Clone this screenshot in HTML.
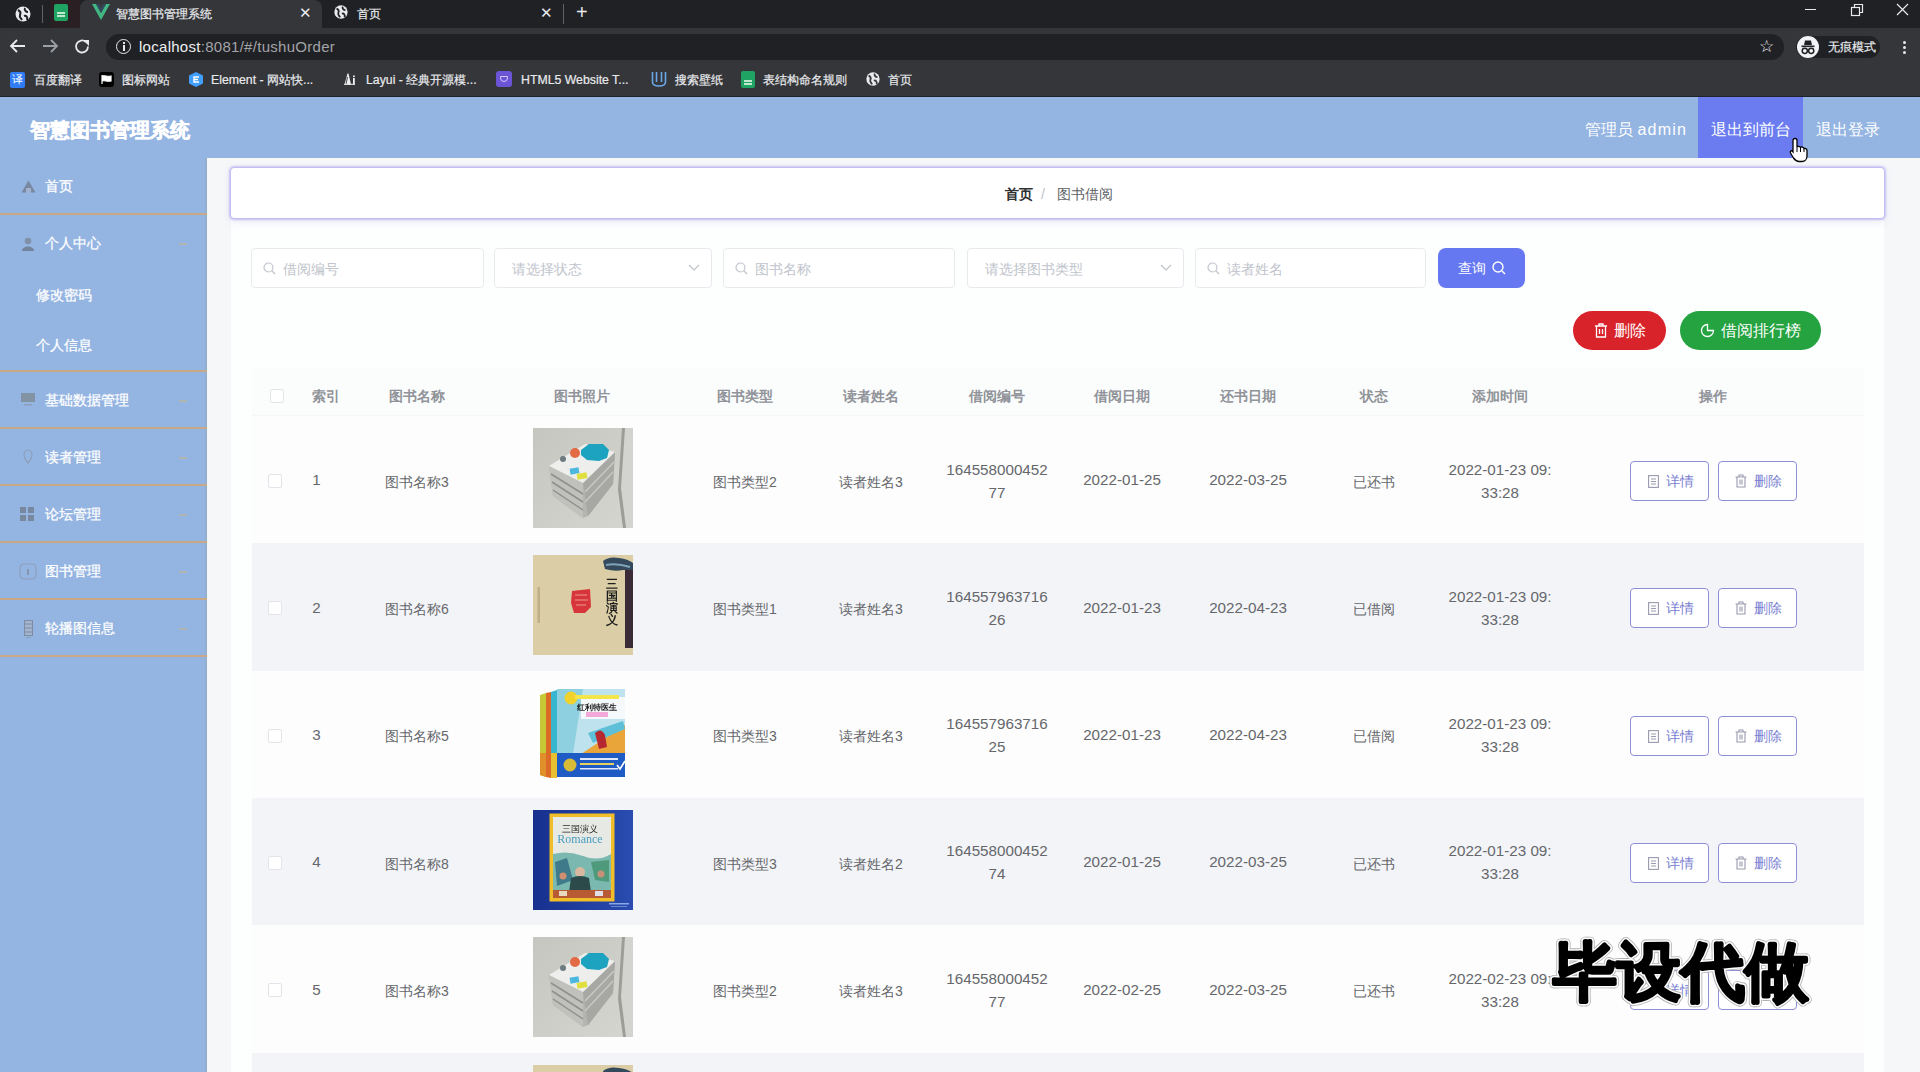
<!DOCTYPE html>
<html><head><meta charset="utf-8"><style>
*{box-sizing:border-box;margin:0;padding:0}
html,body{width:1920px;height:1072px;overflow:hidden;font-family:"Liberation Sans",sans-serif;background:#f6f8fb}
.a{position:absolute}
.t{position:absolute;white-space:nowrap;line-height:1}
#tabs{left:0;top:0;width:1920px;height:28px;background:#202124}
#toolbar{left:0;top:28px;width:1920px;height:36px;background:#35363a}
#bookmarks{left:0;top:64px;width:1920px;height:33px;background:#35363a}
.bm{color:#e8eaed;font-size:12.3px;top:74px;-webkit-text-stroke:.2px #e8eaed}
#page{left:0;top:97px;width:1920px;height:975px;background:#f5f7f9;overflow:hidden}
#header{left:0;top:0;width:1920px;height:61px;background:#94b4e2}
#sidebar{left:0;top:61px;width:207px;height:914px;background:#94b4e2}
.sep{position:absolute;left:0;width:207px;height:2px;background:#c9a885}
.mi{color:#fff;font-size:14px;-webkit-text-stroke:.25px #fff}
.arr{position:absolute;left:179px;width:8px;height:2px;background:#b9b79a;opacity:.7}
.inp{position:absolute;top:151px;height:40px;border:1px solid #e8eaee;border-radius:4px;background:#fff}
.ph{position:absolute;top:13px;font-size:14px;color:#c0c4cc;white-space:nowrap;line-height:1}
.th{position:absolute;font-size:14px;font-weight:bold;color:#909399;white-space:nowrap;text-align:center;width:200px;line-height:23px}
.td{position:absolute;font-size:14px;color:#65676b;text-align:center;width:200px;line-height:23px}
.ob{position:absolute;width:79px;height:40px;border:1px solid #8f8fd6;border-radius:4px;background:#fff}
.ob span{position:absolute;left:35px;top:12px;font-size:14px;line-height:1;color:#7a7fd2;white-space:nowrap}
.n{font-size:15.2px}
.cb{position:absolute;width:14px;height:14px;border:1px solid #e2e4e9;border-radius:2px;background:#fff}
</style></head>
<body>
<!-- Chrome frame -->
<div id="tabs" class="a">
  <svg class="a" style="left:14px;top:5px" width="18" height="18" viewBox="0 0 18 18"><circle cx="9" cy="9" r="7.5" fill="#e8eaed"/><path d="M4 5 C6 6,7 8,6 10 C5 12,7 13,8 15" stroke="#202124" stroke-width="2" fill="none"/><path d="M11 3 C10 5,12 7,14 7 M10 11 C12 10,14 12,13 15" stroke="#202124" stroke-width="2" fill="none"/></svg>
  <div class="a" style="left:42px;top:5px;width:1px;height:18px;background:#5f6368"></div>
  <div class="a" style="left:50px;top:0;width:30px;height:28px;background:#2a1f22"></div>
  <div class="a" style="left:54px;top:4px;width:14px;height:17px;background:#1fa463;border-radius:2px"></div><div class="a" style="left:57px;top:12px;width:8px;height:1.5px;background:#bfe8cf"></div><div class="a" style="left:57px;top:15px;width:8px;height:1.5px;background:#bfe8cf"></div>
  <div class="a" style="left:80px;top:0;width:242px;height:28px;background:#35363a;border-radius:8px 8px 0 0"></div>
  <svg class="a" style="left:92px;top:4px" width="18" height="16" viewBox="0 0 18 16"><path d="M0 0 L9 16 L18 0 L14 0 L9 9 L4 0 Z" fill="#41b883"/><path d="M4 0 L9 9 L14 0 L11 0 L9 4 L7 0Z" fill="#35495e"/></svg>
  <div class="t" style="left:116px;top:7.5px;color:#eceef0;font-size:12.3px;-webkit-text-stroke:.2px #e8eaed">智慧图书管理系统</div>
  <div class="t" style="left:299px;top:5px;color:#e8eaed;font-size:15px">✕</div>
  <svg class="a" style="left:333px;top:4px" width="16" height="16" viewBox="0 0 18 18"><circle cx="9" cy="9" r="7.5" fill="#e8eaed"/><path d="M4 5 C6 6,7 8,6 10 C5 12,7 13,8 15" stroke="#202124" stroke-width="2" fill="none"/><path d="M11 3 C10 5,12 7,14 7 M10 11 C12 10,14 12,13 15" stroke="#202124" stroke-width="2" fill="none"/></svg>
  <div class="t" style="left:357px;top:7.5px;color:#eceef0;font-size:12.3px;-webkit-text-stroke:.2px #e8eaed">首页</div>
  <div class="t" style="left:540px;top:5px;color:#e8eaed;font-size:15px">✕</div>
  <div class="a" style="left:563px;top:4px;width:1px;height:20px;background:#5f6368"></div>
  <div class="t" style="left:576px;top:2px;color:#e8eaed;font-size:20px">+</div>
  <div class="a" style="left:1805px;top:9px;width:11px;height:1.2px;background:#e8eaed"></div>
  <svg class="a" style="left:1850px;top:3px" width="14" height="14" viewBox="0 0 14 14"><rect x="1.5" y="4.5" width="8" height="8" stroke="#e8eaed" stroke-width="1.2" fill="none"/><path d="M4.5 4.5 V1.5 H12.5 V9.5 H9.5" stroke="#e8eaed" stroke-width="1.2" fill="none"/></svg>
  <svg class="a" style="left:1896px;top:3px" width="13" height="13" viewBox="0 0 13 13"><path d="M1 1 L12 12 M12 1 L1 12" stroke="#e8eaed" stroke-width="1.2"/></svg>
</div>
<div id="toolbar" class="a">
  <svg class="a" style="left:9px;top:10px" width="18" height="16" viewBox="0 0 18 16"><path d="M16 8 H3 M8 2 L2 8 L8 14" stroke="#e8eaed" stroke-width="1.8" fill="none"/></svg>
  <svg class="a" style="left:41px;top:10px" width="18" height="16" viewBox="0 0 18 16"><path d="M2 8 H15 M10 2 L16 8 L10 14" stroke="#9aa0a6" stroke-width="1.8" fill="none"/></svg>
  <svg class="a" style="left:74px;top:10px" width="17" height="17" viewBox="0 0 17 17"><path d="M14 8.5 A6 6 0 1 1 12 4" stroke="#e8eaed" stroke-width="1.8" fill="none"/><path d="M9 2 L15 2 L15 8 Z" fill="#e8eaed"/></svg>
  <div class="a" style="left:106px;top:6px;width:1678px;height:26px;background:#202124;border-radius:13px"></div>
  <div class="a" style="left:116px;top:11px;width:15px;height:15px;border:1.5px solid #e8eaed;border-radius:50%"></div>
  <div class="a" style="left:122.5px;top:17px;width:2px;height:6px;background:#e8eaed"></div>
  <div class="a" style="left:122.5px;top:14px;width:2px;height:2px;background:#e8eaed"></div>
  <div class="t" style="left:139px;top:11px;font-size:15px;letter-spacing:.28px;color:#eceef0">localhost<span style="color:#a2a4a8">:8081/#/tushuOrder</span></div>
  <div class="t" style="left:1759px;top:10px;color:#e8eaed;font-size:17px">☆</div>
  <div class="a" style="left:1796px;top:8px;width:84px;height:22px;background:#202124;border-radius:11px"></div>
  <svg class="a" style="left:1797px;top:8px" width="22" height="22" viewBox="0 0 22 22"><circle cx="11" cy="11" r="11" fill="#f1f3f4"/><path d="M8 4.5 H14 L15 9 H7 Z" fill="#202124"/><rect x="4.5" y="9.5" width="13" height="1.6" fill="#202124"/><circle cx="7.8" cy="14.8" r="2.6" stroke="#202124" stroke-width="1.5" fill="none"/><circle cx="14.2" cy="14.8" r="2.6" stroke="#202124" stroke-width="1.5" fill="none"/><path d="M10.4 14.5 H11.6" stroke="#202124" stroke-width="1.3"/></svg>
  <div class="t" style="left:1828px;top:12.5px;color:#eceef0;font-size:12.3px;-webkit-text-stroke:.2px #e8eaed">无痕模式</div>
  <div class="a" style="left:1903px;top:13px;width:3px;height:3px;background:#e8eaed;border-radius:50%"></div>
  <div class="a" style="left:1903px;top:18px;width:3px;height:3px;background:#e8eaed;border-radius:50%"></div>
  <div class="a" style="left:1903px;top:23px;width:3px;height:3px;background:#e8eaed;border-radius:50%"></div>
</div>
<div id="bookmarks" class="a"><div class="a" style="left:0;top:32px;width:1920px;height:1px;background:#1f2226"></div></div>
<div class="a" style="left:10px;top:72px;width:15px;height:16px;background:#2f7cf6;border-radius:2px"></div><div class="t" style="left:12px;top:74px;font-size:11px;color:#fff">译</div>
<div class="t bm" style="left:34px">百度翻译</div>
<div class="a" style="left:99px;top:72px;width:15px;height:15px;background:#000;border-radius:3px"></div><svg class="a" style="left:101px;top:75px" width="11" height="9" viewBox="0 0 11 9"><path d="M1 0 V9 M1 1 C4 0,6 2,10 1 V6 C6 7,4 5,1 6" stroke="#fff" stroke-width="1.2" fill="#fff"/></svg>
<div class="t bm" style="left:122px">图标网站</div>
<svg class="a" style="left:188px;top:71px" width="16" height="17" viewBox="0 0 16 17"><path d="M8 1 L15 4.5 V12.5 L8 16 L1 12.5 V4.5 Z" fill="#409eff"/><path d="M11 6 H6 V11 H11 M6 8.5 H10" stroke="#fff" stroke-width="1.4" fill="none"/></svg>
<div class="t bm" style="left:211px">Element - 网站快...</div>
<svg class="a" style="left:344px;top:73px" width="12" height="12" viewBox="0 0 12 12"><path d="M0.5 11.5 L3.5 0.5 L4.5 0.5 L7 11.5 Z" fill="#f1f1f1"/><path d="M3.5 4 L2 11.5" stroke="#35363a" stroke-width="0.9"/><rect x="9" y="5" width="1.8" height="6.5" fill="#f1f1f1"/><rect x="9" y="2.5" width="1.8" height="1.6" fill="#f1f1f1"/><rect x="0" y="10.8" width="11" height="1" fill="#f1f1f1"/></svg>
<div class="t bm" style="left:366px">Layui - 经典开源模...</div>
<div class="a" style="left:496px;top:71px;width:16px;height:16px;background:#6b55d6;border-radius:3px"></div><div class="a" style="left:500px;top:76px;width:8px;height:6px;border:1.5px solid #d8c8ff;border-radius:0 0 4px 4px"></div>
<div class="t bm" style="left:521px">HTML5 Website T...</div>
<svg class="a" style="left:651px;top:71px" width="16" height="17" viewBox="0 0 16 17"><path d="M1.5 1 V11 Q1.5 15,8 15 Q14.5 15,14.5 11 V1 M5.5 1 V11 M10.5 1 V11" stroke="#6aa7e8" stroke-width="1.6" fill="none"/></svg>
<div class="t bm" style="left:675px">搜索壁纸</div>
<div class="a" style="left:741px;top:71px;width:14px;height:17px;background:#1fa463;border-radius:2px"></div><div class="a" style="left:744px;top:80px;width:8px;height:1.5px;background:#bfe8cf"></div><div class="a" style="left:744px;top:83px;width:8px;height:1.5px;background:#bfe8cf"></div>
<div class="t bm" style="left:763px">表结构命名规则</div>
<svg class="a" style="left:865px;top:71px" width="16" height="16" viewBox="0 0 18 18"><circle cx="9" cy="9" r="7.5" fill="#e8eaed"/><path d="M4 5 C6 6,7 8,6 10 C5 12,7 13,8 15" stroke="#35363a" stroke-width="2" fill="none"/><path d="M11 3 C10 5,12 7,14 7 M10 11 C12 10,14 12,13 15" stroke="#35363a" stroke-width="2" fill="none"/></svg>
<div class="t bm" style="left:888px">首页</div>

<div id="page" class="a">

<div id="header" class="a">
  <div class="t" style="left:30px;top:23px;font-size:20px;font-weight:bold;color:#fff;-webkit-text-stroke:.5px #fff">智慧图书管理系统</div>
  <div class="t" style="left:1585px;top:25px;font-size:16px;color:#fff">管理员 <span style="letter-spacing:1.2px">admin</span></div>
  <div class="a" style="left:1698px;top:0;width:105px;height:61px;background:#6a7cf0"></div>
  <div class="t" style="left:1711px;top:25px;font-size:16px;color:#fff">退出到前台</div>
  <div class="t" style="left:1816px;top:25px;font-size:16px;color:#fff">退出登录</div>
</div>
<div id="sidebar" class="a"><div class="a" style="left:205px;top:0;width:2px;height:914px;background:#93aed0"></div><div class="t mi" style="left:45px;top:21px">首页</div><svg class="a" style="left:21px;top:22px;opacity:.75" width="15" height="13" viewBox="0 0 15 13"><path d="M7.5 0.5 L14.5 12.5 H0.5 Z" fill="#6f7a8c"/><rect x="5" y="8" width="5" height="5" fill="#a3b3cc"/></svg><div class="sep" style="top:55px"></div><div class="t mi" style="left:45px;top:78px">个人中心</div><svg class="a" style="left:22px;top:79px;opacity:.75" width="12" height="14" viewBox="0 0 12 14"><circle cx="6" cy="4" r="3.3" fill="#7a8596"/><path d="M0 14 C0 8,12 8,12 14Z" fill="#6a7487"/></svg><div class="t mi" style="left:36px;top:130px">修改密码</div><div class="t mi" style="left:36px;top:180px">个人信息</div><div class="sep" style="top:212px"></div><div class="t mi" style="left:45px;top:235px">基础数据管理</div><svg class="a" style="left:21px;top:235px;opacity:.75" width="14" height="13" viewBox="0 0 14 13"><rect x="0" y="0" width="14" height="9" fill="#7d8890"/><rect x="3" y="11" width="8" height="1.5" fill="#8d98b0"/></svg><div class="sep" style="top:269px"></div><div class="t mi" style="left:45px;top:292px">读者管理</div><svg class="a" style="left:23px;top:291px;opacity:.75" width="10" height="15" viewBox="0 0 10 15"><path d="M5 1 C8 1,9 4,9 6 C9 9,5 14,5 14 C5 14,1 9,1 6 C1 4,2 1,5 1Z" stroke="#8a96aa" stroke-width="1.2" fill="none"/></svg><div class="sep" style="top:326px"></div><div class="t mi" style="left:45px;top:349px">论坛管理</div><svg class="a" style="left:20px;top:349px;opacity:.75" width="14" height="14" viewBox="0 0 14 14"><rect x="0" y="0" width="6" height="6" fill="#6f7a88"/><rect x="8" y="0" width="6" height="6" fill="#6f7a88"/><rect x="0" y="8" width="6" height="6" fill="#6f7a88"/><rect x="8" y="8" width="6" height="6" fill="#6f7a88"/></svg><div class="sep" style="top:383px"></div><div class="t mi" style="left:45px;top:406px">图书管理</div><svg class="a" style="left:19px;top:405px;opacity:.75" width="18" height="17" viewBox="0 0 18 17"><rect x="1" y="1" width="16" height="15" rx="4" stroke="#8b98ae" stroke-width="1.2" fill="none"/><rect x="8" y="6" width="2" height="6" fill="#7f8ba0"/></svg><div class="sep" style="top:440px"></div><div class="t mi" style="left:45px;top:463px">轮播图信息</div><svg class="a" style="left:24px;top:462px;opacity:.75" width="9" height="18" viewBox="0 0 9 18"><rect x="0.5" y="0.5" width="8" height="15" stroke="#74808f" stroke-width="1" fill="#a9b6c8"/><path d="M1 4 H8 M1 8 H8 M1 12 H8" stroke="#74808f" stroke-width="1"/><rect x="2" y="17" width="5" height="1" fill="#8a96a8"/></svg><div class="sep" style="top:497px"></div><div class="arr" style="top:85px"></div><div class="arr" style="top:242px"></div><div class="arr" style="top:299px"></div><div class="arr" style="top:356px"></div><div class="arr" style="top:413px"></div><div class="arr" style="top:470px"></div></div><div class="a" style="left:231px;top:123px;width:1653px;height:900px;background:#fdfefe"></div><div class="a" style="left:230px;top:70px;width:1655px;height:52px;background:#fff;border:1.5px solid #c2bdf2;border-radius:4px;box-shadow:0 0 2px 1px rgba(170,160,240,.55),0 3px 8px rgba(150,150,210,.18)">
  <div class="t" style="left:773.5px;top:18.5px;font-size:14px;font-weight:bold;color:#303133">首页</div>
  <div class="t" style="left:810px;top:18.5px;font-size:14px;color:#c0c4cc">/</div>
  <div class="t" style="left:825.5px;top:18.5px;font-size:14px;color:#606266">图书借阅</div>
</div><div class="inp" style="left:251px;width:233px"><svg class="a" style="left:11px;top:13px" width="13" height="13" viewBox="0 0 13 13"><circle cx="5.5" cy="5.5" r="4.5" stroke="#c0c4cc" stroke-width="1.2" fill="none"/><path d="M9 9 L12 12" stroke="#c0c4cc" stroke-width="1.2"/></svg><div class="ph" style="left:31px">借阅编号</div></div><div class="inp" style="left:494px;width:218px"><div class="ph" style="left:17px">请选择状态</div><svg class="a" style="left:193px;top:15px" width="12" height="8" viewBox="0 0 12 8"><path d="M1 1 L6 6 L11 1" stroke="#c0c4cc" stroke-width="1.2" fill="none"/></svg></div><div class="inp" style="left:723px;width:232px"><svg class="a" style="left:11px;top:13px" width="13" height="13" viewBox="0 0 13 13"><circle cx="5.5" cy="5.5" r="4.5" stroke="#c0c4cc" stroke-width="1.2" fill="none"/><path d="M9 9 L12 12" stroke="#c0c4cc" stroke-width="1.2"/></svg><div class="ph" style="left:31px">图书名称</div></div><div class="inp" style="left:967px;width:217px"><div class="ph" style="left:17px">请选择图书类型</div><svg class="a" style="left:192px;top:15px" width="12" height="8" viewBox="0 0 12 8"><path d="M1 1 L6 6 L11 1" stroke="#c0c4cc" stroke-width="1.2" fill="none"/></svg></div><div class="inp" style="left:1195px;width:231px"><svg class="a" style="left:11px;top:13px" width="13" height="13" viewBox="0 0 13 13"><circle cx="5.5" cy="5.5" r="4.5" stroke="#c0c4cc" stroke-width="1.2" fill="none"/><path d="M9 9 L12 12" stroke="#c0c4cc" stroke-width="1.2"/></svg><div class="ph" style="left:31px">读者姓名</div></div><div class="a" style="left:1438px;top:151px;width:87px;height:40px;background:#6677f2;border-radius:8px">
  <div class="t" style="left:20px;top:13px;font-size:14px;color:#fff">查询</div>
  <svg class="a" style="left:54px;top:13px" width="14" height="14" viewBox="0 0 14 14"><circle cx="6" cy="6" r="5" stroke="#fff" stroke-width="1.4" fill="none"/><path d="M10 10 L13 13" stroke="#fff" stroke-width="1.4"/></svg>
</div><div class="a" style="left:1573px;top:214px;width:93px;height:39px;background:#d9232b;border-radius:20px">
  <svg class="a" style="left:21px;top:12px" width="14" height="15" viewBox="0 0 14 15"><path d="M1 3 H13 M5 3 V1 H9 V3 M2.5 3 V14 H11.5 V3 M5.5 6 V11 M8.5 6 V11" stroke="#fff" stroke-width="1.3" fill="none"/></svg>
  <div class="t" style="left:41px;top:11.5px;font-size:16px;color:#fff">删除</div>
</div><div class="a" style="left:1680px;top:214px;width:141px;height:39px;background:#24a340;border-radius:20px">
  <svg class="a" style="left:20px;top:12px" width="15" height="15" viewBox="0 0 15 15"><path d="M7.5 1.5 A6 6 0 1 0 13.5 7.5 H7.5 Z" stroke="#fff" stroke-width="1.3" fill="none"/></svg>
  <div class="t" style="left:41px;top:11.5px;font-size:16px;color:#fff">借阅排行榜</div>
</div><div class="a" style="left:252px;top:271px;width:1612px;height:48px;background:#fbfcfc;border-bottom:1px solid #f5f6f8"></div><div class="cb" style="left:270px;top:292px"></div><div class="th" style="left:226px;top:288px">索引</div><div class="th" style="left:317px;top:288px">图书名称</div><div class="th" style="left:482px;top:288px">图书照片</div><div class="th" style="left:645px;top:288px">图书类型</div><div class="th" style="left:771px;top:288px">读者姓名</div><div class="th" style="left:897px;top:288px">借阅编号</div><div class="th" style="left:1022px;top:288px">借阅日期</div><div class="th" style="left:1148px;top:288px">还书日期</div><div class="th" style="left:1274px;top:288px">状态</div><div class="th" style="left:1400px;top:288px">添加时间</div><div class="th" style="left:1613px;top:288px">操作</div><div class="a" style="left:252px;top:319.0px;width:1612px;height:127.8px;background:#fdfdfe"></div><div class="cb" style="left:268px;top:377.0px"></div><div class="td n" style="left:216.5px;top:371.3px">1</div><div class="td" style="left:317px;top:373.6px">图书名称3</div><div class="td" style="left:645px;top:373.6px">图书类型2</div><div class="td" style="left:771px;top:373.6px">读者姓名3</div><div class="td n" style="left:1022px;top:371.3px">2022-01-25</div><div class="td n" style="left:1148px;top:371.3px">2022-03-25</div><div class="td" style="left:1274px;top:373.6px">已还书</div><div class="td n" style="left:897px;top:360.5px">164558000452<br>77</div><div class="td n" style="left:1400px;top:360.5px">2022-01-23 09:<br>33:28</div><div class="a" style="left:533px;top:331.0px;width:100px;height:100px;overflow:hidden"><div style="filter:blur(.45px);width:100px;height:100px"><svg width="100" height="100" viewBox="0 0 100 100"><defs><linearGradient id="g1" x1="0" y1="0" x2="1" y2="1"><stop offset="0" stop-color="#c6c6c1"/><stop offset="1" stop-color="#d6d6d1"/></linearGradient></defs>
<rect width="100" height="100" fill="url(#g1)"/><path d="M90 0 L100 0 L100 100 L92 100 L87 62Z" fill="#d3d3cf"/><path d="M89 0 L92 0 L88 60 L93 100 L90 100 L85 62Z" fill="#9c9c98"/>
<path d="M16 38 L20 68 L50 90 L55 88 L80 56 L82 24Z" fill="#b4b4b0"/>
<path d="M16 38 L20 68 L50 90 L50 55Z" fill="#c0c0bc"/><path d="M18 46 L50 66 M19 54 L50 74 M20 62 L50 82" stroke="#8f8f8b" stroke-width="1.5"/>
<path d="M50 55 L82 24 L80 56 L55 88Z" fill="#a7a7a3"/><path d="M52 64 L81 34 M52 74 L80 44" stroke="#c8c8c4" stroke-width="1.5"/>
<path d="M16 38 L52 16 L82 24 L50 55Z" fill="#eeeeec"/>
<path d="M48 22 L56 16 L70 16 L76 22 L74 30 L66 33 L54 32 L48 27Z" fill="#1da3bf"/><circle cx="42" cy="25" r="5" fill="#e26a45"/><circle cx="30" cy="31" r="3" fill="#6d7a80"/>
<rect x="37" y="40" width="9" height="6" fill="#4cb8e0" transform="rotate(-10 41 43)"/><rect x="44" y="45" width="10" height="6" fill="#dfe040" transform="rotate(-10 49 48)"/></svg></div></div><div class="ob" style="left:1630px;top:364.0px"><svg class="a" style="left:17px;top:13px" width="11" height="13" viewBox="0 0 11 13"><rect x="0.6" y="0.6" width="9.8" height="11.8" stroke="#9a9ab0" stroke-width="1.1" fill="none"/><path d="M3 4 H8 M3 6.5 H8 M3 9 H8" stroke="#9a9ab0" stroke-width="1"/></svg><span>详情</span></div><div class="ob" style="left:1718px;top:364.0px"><svg class="a" style="left:16px;top:12px" width="12" height="14" viewBox="0 0 12 14"><path d="M0.5 3 H11.5 M4 3 V1 H8 V3 M2 3 V13 H10 V3 M5 5.5 V10.5 M7 5.5 V10.5" stroke="#9a9ab0" stroke-width="1.1" fill="none"/></svg><span>删除</span></div><div class="a" style="left:252px;top:446.3px;width:1612px;height:127.8px;background:#f3f4f8"></div><div class="cb" style="left:268px;top:504.3px"></div><div class="td n" style="left:216.5px;top:498.6px">2</div><div class="td" style="left:317px;top:500.9px">图书名称6</div><div class="td" style="left:645px;top:500.9px">图书类型1</div><div class="td" style="left:771px;top:500.9px">读者姓名3</div><div class="td n" style="left:1022px;top:498.6px">2022-01-23</div><div class="td n" style="left:1148px;top:498.6px">2022-04-23</div><div class="td" style="left:1274px;top:500.9px">已借阅</div><div class="td n" style="left:897px;top:487.8px">164557963716<br>26</div><div class="td n" style="left:1400px;top:487.8px">2022-01-23 09:<br>33:28</div><div class="a" style="left:533px;top:458.3px;width:100px;height:100px;overflow:hidden"><div style="filter:blur(.45px);width:100px;height:100px"><svg width="100" height="100" viewBox="0 0 100 100"><rect width="100" height="100" fill="#dbcea6"/>
<rect x="92" y="14" width="8" height="79" fill="#3b2b36"/><path d="M70 6 Q76 1 86 3 Q95 4 100 8 L100 15 L90 15 Q82 17 72 14Z" fill="#34495c"/><path d="M73 10 Q84 8 97 12" stroke="#7fa3b8" stroke-width="2" fill="none"/>
<text x="78.5" y="33" font-size="11.5" font-weight="bold" fill="#1e1e1e" text-anchor="middle">三</text><text x="78.5" y="45" font-size="11.5" font-weight="bold" fill="#1e1e1e" text-anchor="middle">国</text><text x="78.5" y="57" font-size="11.5" font-weight="bold" fill="#1e1e1e" text-anchor="middle">演</text><text x="78.5" y="69" font-size="11.5" font-weight="bold" fill="#1e1e1e" text-anchor="middle">义</text>
<path d="M39 36 L57 34 L58 52 L52 58 L41 58 L38 48Z" fill="#d8343c"/><path d="M42 40 H54 M42 45 H55 M43 50 H53" stroke="#e89a90" stroke-width="1"/><rect x="4.5" y="32" width="2.5" height="36" fill="#bfae88"/></svg></div></div><div class="ob" style="left:1630px;top:491.3px"><svg class="a" style="left:17px;top:13px" width="11" height="13" viewBox="0 0 11 13"><rect x="0.6" y="0.6" width="9.8" height="11.8" stroke="#9a9ab0" stroke-width="1.1" fill="none"/><path d="M3 4 H8 M3 6.5 H8 M3 9 H8" stroke="#9a9ab0" stroke-width="1"/></svg><span>详情</span></div><div class="ob" style="left:1718px;top:491.3px"><svg class="a" style="left:16px;top:12px" width="12" height="14" viewBox="0 0 12 14"><path d="M0.5 3 H11.5 M4 3 V1 H8 V3 M2 3 V13 H10 V3 M5 5.5 V10.5 M7 5.5 V10.5" stroke="#9a9ab0" stroke-width="1.1" fill="none"/></svg><span>删除</span></div><div class="a" style="left:252px;top:573.6px;width:1612px;height:127.8px;background:#fdfdfe"></div><div class="cb" style="left:268px;top:631.6px"></div><div class="td n" style="left:216.5px;top:625.9px">3</div><div class="td" style="left:317px;top:628.2px">图书名称5</div><div class="td" style="left:645px;top:628.2px">图书类型3</div><div class="td" style="left:771px;top:628.2px">读者姓名3</div><div class="td n" style="left:1022px;top:625.9px">2022-01-23</div><div class="td n" style="left:1148px;top:625.9px">2022-04-23</div><div class="td" style="left:1274px;top:628.2px">已借阅</div><div class="td n" style="left:897px;top:615.1px">164557963716<br>25</div><div class="td n" style="left:1400px;top:615.1px">2022-01-23 09:<br>33:28</div><div class="a" style="left:533px;top:585.6px;width:100px;height:100px;overflow:hidden"><div style="filter:blur(.45px);width:100px;height:100px"><svg width="100" height="100" viewBox="0 0 100 100"><rect width="100" height="100" fill="#fdfdfe"/>
<path d="M7 12 L13 10 L13 94 L7 92Z" fill="#c5c936"/><path d="M7 70 L13 70 L13 94 L7 92Z" fill="#e0902a"/><path d="M13 10 L18 9 L18 95 L13 94Z" fill="#de6a28"/><path d="M18 9 L24 7 L24 95 L18 95Z" fill="#37b6cf"/><path d="M18 70 L24 70 L24 95 L18 95Z" fill="#e8c030"/>
<rect x="24" y="6" width="68" height="65" fill="#bfe3ee"/><path d="M24 6 H50 L40 71 H24Z" fill="#8fd0e0"/><rect x="48" y="14" width="44" height="22" fill="#f6f9fb"/>
<circle cx="38" cy="15" r="6.5" fill="#f0d22a"/><rect x="42" y="12" width="44" height="4" fill="#f3e64a"/>
<text x="64" y="27" font-size="8" font-weight="bold" fill="#1a1a1a" text-anchor="middle">红利特医生</text><rect x="53" y="29" width="22" height="5" fill="#f2a8d8"/>
<path d="M48 71 L92 42 L92 71Z" fill="#e9a43a"/><path d="M55 50 L90 38 L92 46 L60 60Z" fill="#5ec0d8"/><path d="M62 50 Q68 44 72 52 L74 64 L66 66Z" fill="#b62830"/>
<rect x="24" y="70" width="68" height="24" fill="#1f5bc4"/><circle cx="37" cy="82" r="6.5" fill="#d8bc38"/><rect x="47" y="75" width="38" height="2" fill="#dfe8ff"/><rect x="47" y="80" width="34" height="2" fill="#e8d060"/><rect x="47" y="85" width="38" height="1.5" fill="#dfe8ff"/><path d="M84 82 L87 86 L92 78" stroke="#ffffff" stroke-width="1.6" fill="none"/></svg></div></div><div class="ob" style="left:1630px;top:618.6px"><svg class="a" style="left:17px;top:13px" width="11" height="13" viewBox="0 0 11 13"><rect x="0.6" y="0.6" width="9.8" height="11.8" stroke="#9a9ab0" stroke-width="1.1" fill="none"/><path d="M3 4 H8 M3 6.5 H8 M3 9 H8" stroke="#9a9ab0" stroke-width="1"/></svg><span>详情</span></div><div class="ob" style="left:1718px;top:618.6px"><svg class="a" style="left:16px;top:12px" width="12" height="14" viewBox="0 0 12 14"><path d="M0.5 3 H11.5 M4 3 V1 H8 V3 M2 3 V13 H10 V3 M5 5.5 V10.5 M7 5.5 V10.5" stroke="#9a9ab0" stroke-width="1.1" fill="none"/></svg><span>删除</span></div><div class="a" style="left:252px;top:700.9px;width:1612px;height:127.8px;background:#f3f4f8"></div><div class="cb" style="left:268px;top:758.9px"></div><div class="td n" style="left:216.5px;top:753.2px">4</div><div class="td" style="left:317px;top:755.5px">图书名称8</div><div class="td" style="left:645px;top:755.5px">图书类型3</div><div class="td" style="left:771px;top:755.5px">读者姓名2</div><div class="td n" style="left:1022px;top:753.2px">2022-01-25</div><div class="td n" style="left:1148px;top:753.2px">2022-03-25</div><div class="td" style="left:1274px;top:755.5px">已还书</div><div class="td n" style="left:897px;top:742.4px">164558000452<br>74</div><div class="td n" style="left:1400px;top:742.4px">2022-01-23 09:<br>33:28</div><div class="a" style="left:533px;top:712.9px;width:100px;height:100px;overflow:hidden"><div style="filter:blur(.45px);width:100px;height:100px"><svg width="100" height="100" viewBox="0 0 100 100"><defs><linearGradient id="g4" x1="0" y1="0" x2="1" y2="0"><stop offset="0" stop-color="#16308e"/><stop offset="1" stop-color="#2a4cb0"/></linearGradient></defs><rect width="100" height="100" fill="url(#g4)"/>
<rect x="16.5" y="3.5" width="65" height="88" fill="#f0be28"/><rect x="20" y="7" width="58" height="81" fill="#e6e9e4"/>
<text x="47" y="22" font-size="8.5" font-family="Liberation Serif" fill="#2a2a2a" text-anchor="middle">三国演义</text><text x="47" y="33" font-size="12" fill="#4a9cc0" text-anchor="middle" font-family="Liberation Serif">Romance</text>
<path d="M20 44 Q35 40 50 46 T78 44 V88 H20Z" fill="#7ab8b0"/><path d="M22 52 L34 48 L40 70 L24 76Z" fill="#3e7a8a"/><path d="M58 52 L76 50 L76 72 L62 70Z" fill="#4f9a7a"/>
<circle cx="47" cy="62" r="5" fill="#d8b8a0"/><path d="M38 68 Q47 64 56 68 L58 82 H36Z" fill="#2c4a4a"/><circle cx="30" cy="66" r="3.5" fill="#d09070"/><circle cx="68" cy="64" r="3.5" fill="#c89078"/>
<rect x="20" y="80" width="58" height="8" fill="#b85a34"/><rect x="26" y="81" width="8" height="5" fill="#e8d8c0"/><rect x="62" y="81" width="8" height="5" fill="#e0e0e8"/>
<rect x="76" y="93" width="20" height="1.5" fill="#8aa8e8"/><rect x="78" y="96" width="16" height="1" fill="#6a88d0"/></svg></div></div><div class="ob" style="left:1630px;top:745.9px"><svg class="a" style="left:17px;top:13px" width="11" height="13" viewBox="0 0 11 13"><rect x="0.6" y="0.6" width="9.8" height="11.8" stroke="#9a9ab0" stroke-width="1.1" fill="none"/><path d="M3 4 H8 M3 6.5 H8 M3 9 H8" stroke="#9a9ab0" stroke-width="1"/></svg><span>详情</span></div><div class="ob" style="left:1718px;top:745.9px"><svg class="a" style="left:16px;top:12px" width="12" height="14" viewBox="0 0 12 14"><path d="M0.5 3 H11.5 M4 3 V1 H8 V3 M2 3 V13 H10 V3 M5 5.5 V10.5 M7 5.5 V10.5" stroke="#9a9ab0" stroke-width="1.1" fill="none"/></svg><span>删除</span></div><div class="a" style="left:252px;top:828.2px;width:1612px;height:127.8px;background:#fdfdfe"></div><div class="cb" style="left:268px;top:886.2px"></div><div class="td n" style="left:216.5px;top:880.5px">5</div><div class="td" style="left:317px;top:882.8px">图书名称3</div><div class="td" style="left:645px;top:882.8px">图书类型2</div><div class="td" style="left:771px;top:882.8px">读者姓名3</div><div class="td n" style="left:1022px;top:880.5px">2022-02-25</div><div class="td n" style="left:1148px;top:880.5px">2022-03-25</div><div class="td" style="left:1274px;top:882.8px">已还书</div><div class="td n" style="left:897px;top:869.7px">164558000452<br>77</div><div class="td n" style="left:1400px;top:869.7px">2022-02-23 09:<br>33:28</div><div class="a" style="left:533px;top:840.2px;width:100px;height:100px;overflow:hidden"><div style="filter:blur(.45px);width:100px;height:100px"><svg width="100" height="100" viewBox="0 0 100 100"><defs><linearGradient id="g1" x1="0" y1="0" x2="1" y2="1"><stop offset="0" stop-color="#c6c6c1"/><stop offset="1" stop-color="#d6d6d1"/></linearGradient></defs>
<rect width="100" height="100" fill="url(#g1)"/><path d="M90 0 L100 0 L100 100 L92 100 L87 62Z" fill="#d3d3cf"/><path d="M89 0 L92 0 L88 60 L93 100 L90 100 L85 62Z" fill="#9c9c98"/>
<path d="M16 38 L20 68 L50 90 L55 88 L80 56 L82 24Z" fill="#b4b4b0"/>
<path d="M16 38 L20 68 L50 90 L50 55Z" fill="#c0c0bc"/><path d="M18 46 L50 66 M19 54 L50 74 M20 62 L50 82" stroke="#8f8f8b" stroke-width="1.5"/>
<path d="M50 55 L82 24 L80 56 L55 88Z" fill="#a7a7a3"/><path d="M52 64 L81 34 M52 74 L80 44" stroke="#c8c8c4" stroke-width="1.5"/>
<path d="M16 38 L52 16 L82 24 L50 55Z" fill="#eeeeec"/>
<path d="M48 22 L56 16 L70 16 L76 22 L74 30 L66 33 L54 32 L48 27Z" fill="#1da3bf"/><circle cx="42" cy="25" r="5" fill="#e26a45"/><circle cx="30" cy="31" r="3" fill="#6d7a80"/>
<rect x="37" y="40" width="9" height="6" fill="#4cb8e0" transform="rotate(-10 41 43)"/><rect x="44" y="45" width="10" height="6" fill="#dfe040" transform="rotate(-10 49 48)"/></svg></div></div><div class="ob" style="left:1630px;top:873.2px"><svg class="a" style="left:17px;top:13px" width="11" height="13" viewBox="0 0 11 13"><rect x="0.6" y="0.6" width="9.8" height="11.8" stroke="#9a9ab0" stroke-width="1.1" fill="none"/><path d="M3 4 H8 M3 6.5 H8 M3 9 H8" stroke="#9a9ab0" stroke-width="1"/></svg><span>详情</span></div><div class="ob" style="left:1718px;top:873.2px"><svg class="a" style="left:16px;top:12px" width="12" height="14" viewBox="0 0 12 14"><path d="M0.5 3 H11.5 M4 3 V1 H8 V3 M2 3 V13 H10 V3 M5 5.5 V10.5 M7 5.5 V10.5" stroke="#9a9ab0" stroke-width="1.1" fill="none"/></svg><span>删除</span></div><div class="a" style="left:252px;top:955.5px;width:1612px;height:127.8px;background:#f3f4f8"></div><div class="cb" style="left:268px;top:1013.5px"></div><div class="td n" style="left:216.5px;top:1007.8px">6</div><div class="td" style="left:317px;top:1010.1px">图书名称6</div><div class="td" style="left:645px;top:1010.1px">图书类型1</div><div class="td" style="left:771px;top:1010.1px">读者姓名3</div><div class="td n" style="left:1022px;top:1007.8px">2022-01-23</div><div class="td n" style="left:1148px;top:1007.8px">2022-04-23</div><div class="td" style="left:1274px;top:1010.1px">已借阅</div><div class="td n" style="left:897px;top:997.0px">164557963716<br>26</div><div class="td n" style="left:1400px;top:997.0px">2022-01-23 09:<br>33:28</div><div class="a" style="left:533px;top:967.5px;width:100px;height:100px;overflow:hidden"><div style="filter:blur(.45px);width:100px;height:100px"><svg width="100" height="100" viewBox="0 0 100 100"><rect width="100" height="100" fill="#dbcea6"/>
<rect x="92" y="14" width="8" height="79" fill="#3b2b36"/><path d="M70 6 Q76 1 86 3 Q95 4 100 8 L100 15 L90 15 Q82 17 72 14Z" fill="#34495c"/><path d="M73 10 Q84 8 97 12" stroke="#7fa3b8" stroke-width="2" fill="none"/>
<text x="78.5" y="33" font-size="11.5" font-weight="bold" fill="#1e1e1e" text-anchor="middle">三</text><text x="78.5" y="45" font-size="11.5" font-weight="bold" fill="#1e1e1e" text-anchor="middle">国</text><text x="78.5" y="57" font-size="11.5" font-weight="bold" fill="#1e1e1e" text-anchor="middle">演</text><text x="78.5" y="69" font-size="11.5" font-weight="bold" fill="#1e1e1e" text-anchor="middle">义</text>
<path d="M39 36 L57 34 L58 52 L52 58 L41 58 L38 48Z" fill="#d8343c"/><path d="M42 40 H54 M42 45 H55 M43 50 H53" stroke="#e89a90" stroke-width="1"/><rect x="4.5" y="32" width="2.5" height="36" fill="#bfae88"/></svg></div></div><div class="ob" style="left:1630px;top:1000.5px"><svg class="a" style="left:17px;top:13px" width="11" height="13" viewBox="0 0 11 13"><rect x="0.6" y="0.6" width="9.8" height="11.8" stroke="#9a9ab0" stroke-width="1.1" fill="none"/><path d="M3 4 H8 M3 6.5 H8 M3 9 H8" stroke="#9a9ab0" stroke-width="1"/></svg><span>详情</span></div><div class="ob" style="left:1718px;top:1000.5px"><svg class="a" style="left:16px;top:12px" width="12" height="14" viewBox="0 0 12 14"><path d="M0.5 3 H11.5 M4 3 V1 H8 V3 M2 3 V13 H10 V3 M5 5.5 V10.5 M7 5.5 V10.5" stroke="#9a9ab0" stroke-width="1.1" fill="none"/></svg><span>删除</span></div><svg class="a" style="left:1550px;top:834px;overflow:visible" width="270" height="90" viewBox="0 0 270 90"><text x="3" y="63" font-size="64" font-weight="900" font-family="Liberation Sans, sans-serif" stroke-linejoin="round" fill="#fff" stroke="#b0b0b0" stroke-width="7.5">毕设代做</text><text x="3" y="63" font-size="64" font-weight="900" font-family="Liberation Sans, sans-serif" stroke-linejoin="round" fill="#fff" stroke="#fdfdfd" stroke-width="5.8">毕设代做</text><text x="3" y="63" font-size="64" font-weight="900" font-family="Liberation Sans, sans-serif" stroke-linejoin="round" fill="#000" stroke="#000" stroke-width="2.8">毕设代做</text></svg><svg class="a" style="left:1789px;top:40px" width="22" height="26" viewBox="0 0 22 26"><path d="M6 1.5 C7.5 1.5 8 2.5 8 3.5 V10 C8.5 9 11 9 11.5 10.5 C12.5 9.5 14.5 10 15 11.5 C16 11 18 11.5 18 13.5 V19 C18 22 16 24.5 13 24.5 H10 C7.5 24.5 6 23 4.5 21 L1.5 16 C1 15 1.5 13.5 3 13.8 L4 15 V3.5 C4 2.5 4.5 1.5 6 1.5Z" fill="#fff" stroke="#000" stroke-width="1.3"/><path d="M8 10 V15 M11.5 10.5 V15 M15 11.5 V15" stroke="#000" stroke-width="1"/></svg>
</div>
</body></html>
